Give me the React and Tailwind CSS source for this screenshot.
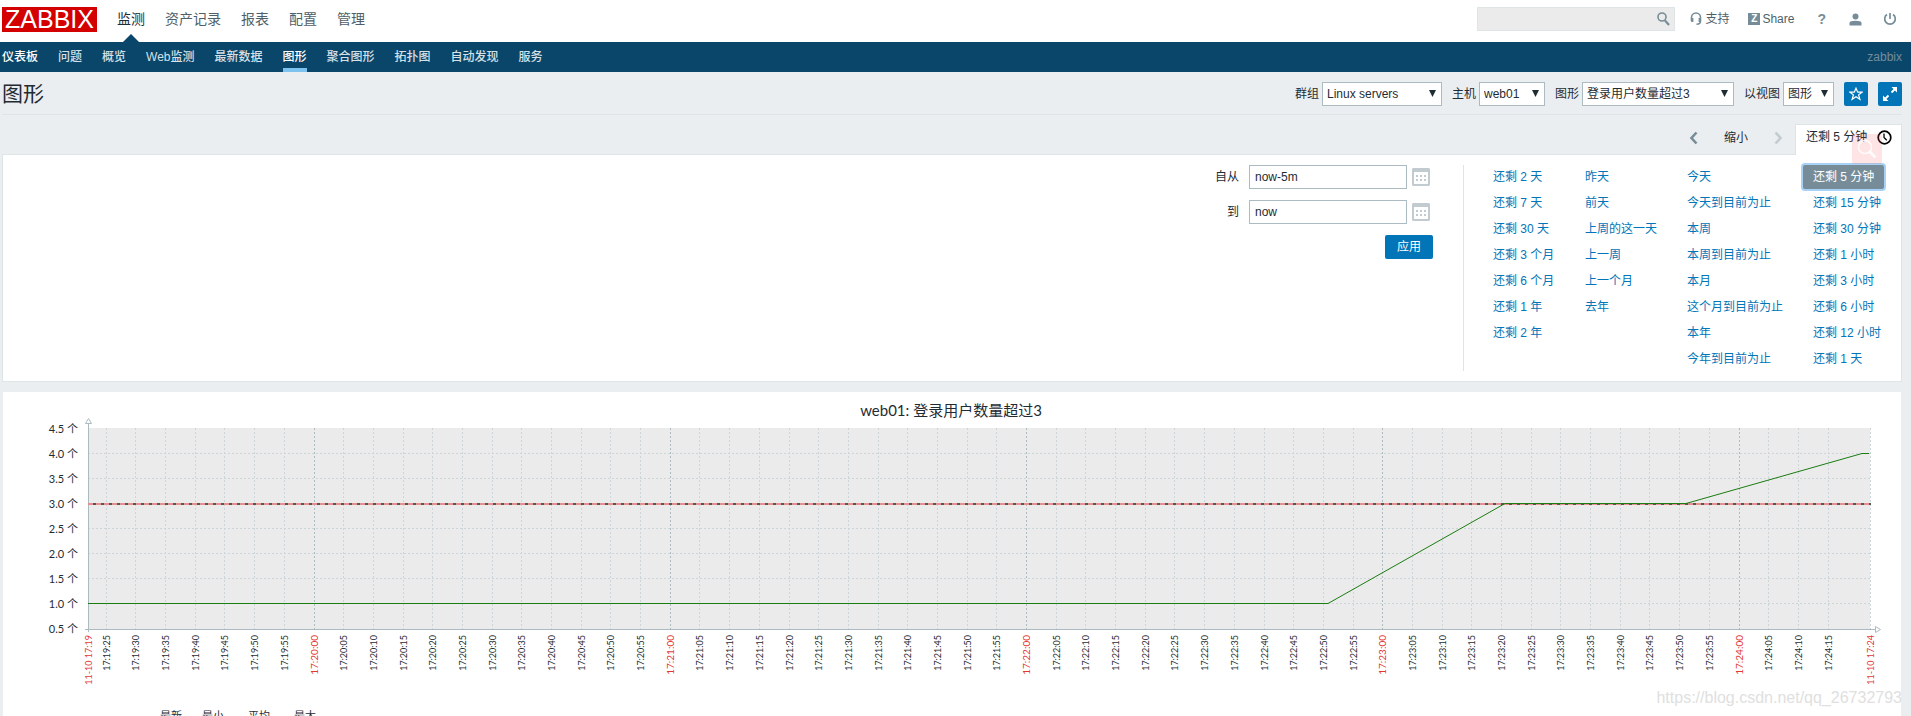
import React from 'react';

const mainMenu = ['监测', '资产记录', '报表', '配置', '管理'];
const subMenu = ['仪表板', '问题', '概览', 'Web监测', '最新数据', '图形', '聚合图形', '拓扑图', '自动发现', '服务'];

const filters = [
  { id: 'group', label: '群组', value: 'Linux servers', width: 'w-[120px]' },
  { id: 'host', label: '主机', value: 'web01', width: 'w-[66px]' },
  { id: 'graph', label: '图形', value: '登录用户数量超过3', width: 'w-[152px]' },
  { id: 'view', label: '以视图', value: '图形', width: 'w-[51px]' },
];

const ranges = [
  { width: 'w-[92px]', items: ['还剩 2 天', '还剩 7 天', '还剩 30 天', '还剩 3 个月', '还剩 6 个月', '还剩 1 年', '还剩 2 年'] },
  { width: 'w-[102px]', items: ['昨天', '前天', '上周的这一天', '上一周', '上一个月', '去年'] },
  { width: 'w-[126px]', items: ['今天', '今天到目前为止', '本周', '本周到目前为止', '本月', '这个月到目前为止', '本年', '今年到目前为止'] },
  { width: 'w-[88px]', items: ['还剩 5 分钟', '还剩 15 分钟', '还剩 30 分钟', '还剩 1 小时', '还剩 3 小时', '还剩 6 小时', '还剩 12 小时', '还剩 1 天'] },
];

const SearchIcon = () => (
  <svg width="13" height="14" viewBox="0 0 13 14" fill="none" stroke="#768d99">
    <circle cx="5" cy="5" r="4" strokeWidth="1.6" />
    <path d="M8 8.5l4 4.5" strokeWidth="2.2" />
  </svg>
);

const SupportIcon = () => (
  <svg width="12" height="14" viewBox="0 0 12 14" fill="none" stroke="#768d99" strokeWidth="1.6">
    <path d="M1.500 9V5.500a4.300 4.300 0 0 1 9 0V9c0 2-1 3.300-4 3.300" />
    <path d="M2.300 6v4M9.700 6v4" strokeWidth="2.200" />
  </svg>
);

const UserIcon = () => (
  <svg width="13" height="13" viewBox="0 0 13 13" fill="#768d99">
    <circle cx="6.500" cy="3.500" r="3" />
    <path d="M.5 12.500V10c0-1.500 2-2.200 6-2.200s6 .7 6 2.200v2.500z" />
  </svg>
);

const PowerIcon = () => (
  <svg width="14" height="14" viewBox="0 0 14 14" fill="none" stroke="#768d99" strokeWidth="1.700">
    <path d="M4 2.500a5.300 5.300 0 1 0 6 0M7 1v6" />
  </svg>
);

const CalendarIcon = () => (
  <svg width="18" height="18" viewBox="0 0 18 18">
    <path fill="#c1cbd0" fillRule="evenodd" d="M1 0h16l1 1v16l-1 1H1l-1-1V1zM2 4v12h14V4z" />
    <path fill="#c1cbd0" d="M4 7h2v2H4zM8 7h2v2H8zM12 7h2v2h-2zM4 11h2v2H4zM8 11h2v2H8zM12 11h2v2h-2z" />
  </svg>
);

const ClockIcon = () => (
  <svg width="15" height="15" viewBox="0 0 15 15" fill="none" stroke="#000">
    <circle cx="7.500" cy="7.500" r="6.300" strokeWidth="1.700" />
    <path d="M7 3.500v4l2.800 2.800" strokeWidth="1.300" />
  </svg>
);

const Chevron = ({ flip, color }) => (
  <svg width="9" height="14" viewBox="0 0 9 14" fill="none" stroke={color} strokeWidth="2.600">
    <path d={flip ? 'M1.500 1.500l5 5.500-5 5.500' : 'M7.500 1.500l-5 5.500 5 5.500'} />
  </svg>
);

const Select = ({ id, label, value, width }) => (
  <div className="flex items-center gap-[3px]">
    <label htmlFor={id}>{label}</label>
    <div className={`relative ${width}`}>
      <select id={id} className="block h-6 w-full appearance-none border border-[#acbbc2] bg-white pl-1 text-xs">
        <option>{value}</option>
      </select>
      <svg className="pointer-events-none absolute right-[6px] top-2" width="7" height="7" viewBox="0 0 7 7">
        <path fill="#1f2c33" d="M0 0h7L3.500 7z" />
      </svg>
    </div>
  </div>
);

const pad = (n) => String(n).padStart(2, '0');

// plot area, in pixels of the drawing
const LEFT = 85;
const RIGHT = 1867;
const TOP = 36;
const BOTTOM = 237;
const MINUTE = 356.25;

// one tick every five seconds from 17:19:25 to 17:24:15
const ticks = Array.from({ length: 59 }, (_, i) => {
  const sec = 25 + i * 5;
  const full = sec % 60 === 0;
  return {
    full,
    x: Math.floor(311 + ((sec - 60) / 60) * MINUTE) + 0.5,
    label: `17:${19 + Math.floor(sec / 60)}:${pad(sec % 60)}`,
  };
});

const values = [4.5, 4, 3.5, 3, 2.5, 2, 1.5, 1, 0.5];

const TimeLabel = ({ x, size, color, children }) => (
  <text transform={`translate(${x} 243) rotate(-90)`} textAnchor="end" fontSize={size} fill={color}>{children}</text>
);

const Graph = () => (
  <svg className="block w-full font-[Lato,'Noto_Sans_CJK_SC',sans-serif]" viewBox="0 0 1898 340" fill="#1f2c33">
    <text x="948" y="24" textAnchor="middle" fontSize="15">web01: 登录用户数量超过3</text>
    <rect x={LEFT} y={TOP} width={RIGHT - LEFT} height={BOTTOM - TOP} fill="#ebebeb" />
    {values.map((v, i) => (
      <g key={v}>
        {v < 4.5 && v > 0.5 && (
          <path d={`M${LEFT} ${TOP + i * 25 + 0.5}H${RIGHT}`} stroke="#ccd5d9" strokeDasharray="2 2" />
        )}
        <text x="75" y={TOP + i * 25 + 5} textAnchor="end" fontSize="11">{v.toFixed(1)} 个</text>
      </g>
    ))}
    {ticks.map((t) => (
      <g key={t.label}>
        <path d={`M${t.x} ${TOP}V${BOTTOM}`} stroke={t.full ? '#acbbc2' : '#ccd5d9'} strokeDasharray="2 2" />
        <TimeLabel x={t.x + 3} size={t.full ? 10 : 9} color={t.full ? '#e33734' : '#1f2c33'}>{t.label}</TimeLabel>
      </g>
    ))}
    <path d={`M${RIGHT + 0.5} ${TOP}V${BOTTOM}`} stroke="#ccd5d9" strokeDasharray="2 2" />
    <TimeLabel x={LEFT + 4} size={9} color="#e33734">11-10 17:19</TimeLabel>
    <TimeLabel x={RIGHT + 4} size={9} color="#e33734">11-10 17:24</TimeLabel>

    {/* axes */}
    <g stroke="#acbbc2" fill="#fff">
      <path d={`M${LEFT + 0.5} 30V${BOTTOM + 3}M${LEFT - 3} ${BOTTOM + 0.5}H1873`} />
      <path d="M82.500 31.500h6l-3-5z" />
      <path d="M1872.500 234.500v6l5-3z" />
    </g>

    {/* trigger */}
    <path d={`M${LEFT} 112H${RIGHT + 1}`} stroke="#e58f8f" strokeWidth="2" />
    <path d={`M${LEFT + 5} 112H${RIGHT + 1}`} stroke="#555" strokeWidth="2" strokeDasharray="3 5" />
    <path d="M85 211.500H1325L1502 111.500H1683L1859 61.500H1866" fill="none" stroke="#1a7c11" />

    {/* legend head */}
    <g fontSize="11">
      <text x="157" y="328">最新</text>
      <text x="199" y="328">最小</text>
      <text x="245" y="328">平均</text>
      <text x="291" y="328">最大</text>
    </g>
  </svg>
);

const App = () => {
  return (
    <div className="relative h-screen overflow-hidden bg-[#ebeef0] font-['Liberation_Sans','Noto_Sans_CJK_SC',sans-serif] text-xs text-[#1f2c33]">
      <header className="flex h-[42px] items-start justify-between bg-white pl-0.5 pr-[14px]">
        <div className="flex items-start">
          <a href="#" className="mt-[7px] flex h-[25px] w-[95px] items-center justify-center bg-[#d40000] text-[25px] leading-none text-white">ZABBIX</a>
          <nav className="ml-5 flex h-[42px] gap-5 text-sm">
            {mainMenu.map((item, idx) => (
              <a key={item} href="#" className={`relative pt-[9px] ${idx === 0 ? 'text-[#1f2c33]' : 'text-[#4f5f69]'}`}>
                {item}
                {idx === 0 && (
                  <svg className="absolute bottom-0 left-[6px]" width="16" height="8" viewBox="0 0 16 8">
                    <path fill="#0a466a" d="M0 8l8-8 8 8z" />
                  </svg>
                )}
              </a>
            ))}
          </nav>
        </div>
        <div className="flex h-8 items-center pt-[6px] text-[#4f5f69]">
          <div className="relative">
            <input type="text" aria-label="搜索" className="block h-6 w-[198px] border border-[#dfe4e7] bg-[#ebebeb] px-1" />
            <button aria-label="搜索" className="absolute right-[5px] top-[5px]"><SearchIcon /></button>
          </div>
          <a href="#" className="ml-[15px] flex items-center gap-[3px]"><SupportIcon />支持</a>
          <a href="#" className="ml-[19px] flex items-center gap-0.5">
            <span className="flex h-3 w-3 items-center justify-center bg-[#768d99] text-[10px] font-bold text-white">Z</span>
            Share
          </a>
          <a href="#" className="ml-[23px] text-sm font-bold text-[#768d99]">?</a>
          <a href="#" aria-label="用户" className="ml-[23px]"><UserIcon /></a>
          <a href="#" aria-label="退出" className="ml-[21px]"><PowerIcon /></a>
        </div>
      </header>

      <nav className="flex h-[30px] items-stretch justify-between bg-[#0a466a] pl-0.5 pr-[9px] leading-[30px] text-[#d5e0e7]">
        <div className="flex gap-5">
          {subMenu.map((item, idx) => (
            <a
              key={item}
              href="#"
              className={
                item === '图形'
                  ? 'border-b-4 border-[#7ec3f0] font-medium text-white'
                  : idx === 0 ? 'font-medium text-white' : 'font-medium'
              }
            >
              {item}
            </a>
          ))}
        </div>
        <span className="text-[#768d99]">zabbix</span>
      </nav>

      <main className="ml-0.5 mr-[9px]">
        <div className="flex h-[43px] items-end justify-between border-b border-[#dfe4e7] pb-2">
          <h1 className="text-[21px] leading-6">图形</h1>
          <div className="flex items-center gap-[10px]">
            {filters.map((f) => <Select key={f.id} {...f} />)}
            <button aria-label="收藏" className="flex h-6 w-6 items-center justify-center rounded-xs bg-[#0275b8]">
              <svg width="14" height="14" viewBox="0 0 14 14" fill="none" stroke="#fff" strokeWidth="1.200">
                <path d="M7 1.200l1.700 4h4.300l-3.400 2.700 1.300 4.400L7 9.700l-3.900 2.600 1.300-4.400L1 5.200h4.300z" />
              </svg>
            </button>
            <button aria-label="全屏" className="flex h-6 w-6 items-center justify-center rounded-xs bg-[#0275b8]">
              <svg width="14" height="14" viewBox="0 0 14 14" fill="#fff" stroke="#fff">
                <path stroke="none" d="M8.500 0H14v5.500zM0 8.500V14h5.500z" />
                <path strokeWidth="1.800" d="M12 2L8.500 5.500M2 12l3.500-3.500" />
              </svg>
            </button>
          </div>
        </div>

        <div className="mt-[9px] flex h-[30px] items-center justify-end pb-0.5">
          <button aria-label="向左"><Chevron color="#768d99" /></button>
          <button className="ml-[26px]">缩小</button>
          <button aria-label="向右" className="ml-[26px]"><Chevron flip color="#c1cbd0" /></button>
          <div className="relative z-10 ml-3 h-[31px] w-[107px] self-start border border-b-0 border-[#dfe4e7] bg-white">
            <a href="#" className="flex h-6 items-center gap-[10px] whitespace-nowrap pl-[10px]">还剩 5 分钟<ClockIcon /></a>
            <div className="absolute left-14 top-[9px] flex h-[30px] w-[30px] items-center justify-center rounded-xs bg-[#fb4b4b]/15">
              <svg width="20" height="20" viewBox="0 0 20 20" fill="none" stroke="#fff" strokeOpacity=".85">
                <circle cx="8" cy="8" r="6.500" strokeWidth="1.500" />
                <path d="M13 13l4.500 4.500" strokeWidth="3" strokeLinecap="round" />
              </svg>
            </div>
          </div>
        </div>

        <section className="flex justify-end border border-[#dfe4e7] bg-white py-[10px]">
          <form className="flex flex-col items-end gap-[11px] pr-[30px]">
            <div className="flex items-center">
              <label htmlFor="from" className="mr-[10px]">自从</label>
              <input id="from" type="text" defaultValue="now-5m" className="h-6 w-[158px] border border-[#acbbc2] px-[5px]" />
              <button type="button" aria-label="日历" className="ml-[5px] mr-[3px]"><CalendarIcon /></button>
            </div>
            <div className="flex items-center">
              <label htmlFor="to" className="mr-[10px]">到</label>
              <input id="to" type="text" defaultValue="now" className="h-6 w-[158px] border border-[#acbbc2] px-[5px]" />
              <button type="button" aria-label="日历" className="ml-[5px] mr-[3px]"><CalendarIcon /></button>
            </div>
            <button type="button" className="h-6 w-12 rounded-xs bg-[#0275b8] text-white">应用</button>
          </form>
          <div className="flex border-l border-[#dfe4e7] pl-[29px]">
            {ranges.map((col) => (
              <ul key={col.width} className={`${col.width} space-y-0.5 leading-6`}>
                {col.items.map((item) => (
                  <li key={item} className="whitespace-nowrap">
                    <a
                      href="#"
                      className={
                        item === '还剩 5 分钟'
                          ? '-ml-[10px] inline-block h-6 rounded-xs bg-[#768d99] px-[10px] align-top text-white shadow-[0_0_0_2px_#a8d2f5]'
                          : 'text-[#0275b8]'
                      }
                    >
                      {item}
                    </a>
                  </li>
                ))}
              </ul>
            ))}
          </div>
        </section>

        <section className="mx-px mt-[10px] bg-white">
          <Graph />
        </section>
      </main>

      <div className="absolute bottom-[6px] right-[9px] text-base text-[#e0e0e0]">https://blog.csdn.net/qq_26732793</div>
    </div>
  );
};

export default App;
